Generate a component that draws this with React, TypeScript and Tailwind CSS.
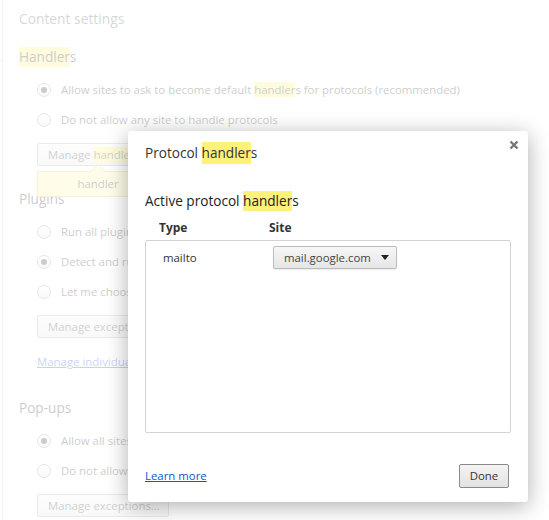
import type { ReactNode } from 'react';

// search-term highlight used on the settings page and in the overlay
function Hit({ children, tall }: { children: ReactNode; tall?: boolean }) {
  return (
    <span className={tall ? 'inline-block bg-[#fff17a] leading-[22px]' : 'bg-[#fff17a]'}>
      {children}
    </span>
  );
}

function Radio({ label, checked }: { label: ReactNode; checked?: boolean }) {
  return (
    <div className="flex h-[30px] items-center pl-[18px]">
      <span className="flex h-[14px] w-[14px] shrink-0 items-center justify-center rounded-full border border-[#999] bg-gradient-to-b from-white to-[#e4e4e4]">
        {checked && <span className="h-[6px] w-[6px] rounded-full bg-[#333]" />}
      </span>
      <span className="ml-[10px] whitespace-nowrap text-[11.4px] leading-[16px] text-[#333]">{label}</span>
    </div>
  );
}

function PageButton({ children }: { children: ReactNode }) {
  return (
    <div className="flex h-[23px] items-center whitespace-nowrap rounded-[2px] border border-[#aaa] bg-gradient-to-b from-[#f6f6f6] to-[#e6e6e6] px-[10px] text-[11.4px] text-[#444]">
      <span>{children}</span>
    </div>
  );
}

function Section({ title, children }: { title: ReactNode; children: ReactNode }) {
  return (
    <section>
      <h3 className="flex h-[24px] items-center text-[13.6px] text-[#303030]">{title}</h3>
      <div className="mt-[6px]">{children}</div>
    </section>
  );
}

function SettingsPage() {
  return (
    <div className="flex h-[520px]">
      <aside className="relative w-[3px] border-r border-[#ccc]">
        <div className="absolute left-0 top-[60px] h-px w-[2px] bg-[#ccc]" />
      </aside>
      <main className="pl-[16px] pt-[7px]">
        <h1 className="flex h-[24px] items-center text-[13.8px] text-[#5c6166]">Content settings</h1>

        <div className="mt-[14px]">
          <Section
            title={
              <span>
                <span className="inline-block bg-[#fff17a] leading-[20px]">Handler</span>s
              </span>
            }
          >
            <Radio checked label={<>Allow sites to ask to become default <Hit>handler</Hit>s for protocols (recommended)</>} />
            <Radio label="Do not allow any site to handle protocols" />
            <div className="relative mt-[8px] ml-[18px] w-[122px]">
              <PageButton>
                Manage <Hit>handler</Hit>s...
              </PageButton>
              <div className="absolute left-0 top-[28px] flex h-[26px] w-full items-center justify-center border border-[#d8c05a] bg-[#fff3a8] text-[11.4px] text-[#333]">
                <svg className="absolute left-[calc(50%-8px)] top-[-8px]" width="16" height="9" viewBox="0 0 16 9">
                  <path d="M0 8.5 L8 0.5 L16 8.5" fill="#fff3a8" stroke="#d8c05a" />
                </svg>
                handler
              </div>
            </div>
          </Section>
        </div>

        <div className="mt-[21px]">
          <Section title="Plugins">
            <Radio label="Run all plugin content" />
            <Radio checked label="Detect and run important plugin content (recommended)" />
            <Radio label="Let me choose when to run plugin content" />
            <div className="mt-[8px] ml-[18px] w-[132px]">
              <PageButton>Manage exceptions...</PageButton>
            </div>
            <div className="ml-[18px] mt-[12px] flex h-[24px] items-center text-[11.4px] text-[#15c] underline">
              Manage individual plugins...
            </div>
          </Section>
        </div>

        <div className="mt-[22px]">
          <Section title="Pop-ups">
            <Radio checked label="Allow all sites to show pop-ups" />
            <Radio label="Do not allow any site to show pop-ups (recommended)" />
            <div className="mt-[8px] ml-[18px] w-[132px]">
              <PageButton>Manage exceptions...</PageButton>
            </div>
          </Section>
        </div>
      </main>
    </div>
  );
}

function HandlersDialog() {
  return (
    <div className="absolute left-[128px] top-[131px] h-[371px] w-[400px] rounded-[3px] bg-white px-[17px] shadow-[0_4px_22px_rgba(0,0,0,0.32)]">
      <button className="absolute right-[9px] top-[9px] flex h-[10px] w-[10px] items-center justify-center">
        <svg width="10" height="10" viewBox="0 0 10 10">
          <path d="M1.5 1.5 L8.5 8.5 M8.5 1.5 L1.5 8.5" stroke="#777" strokeWidth="2.4" />
        </svg>
      </button>

      <div className="mt-[11px] text-[13.6px] leading-[22px] text-[#333]">
        Protocol <Hit tall>handler</Hit>s
      </div>

      <div className="mt-[27px] text-[13.6px] leading-[20px] text-[#222]">
        Active protocol <span className="inline-block bg-[#fff17a] leading-[20px]">handler</span>s
      </div>

      <div className="mt-[9px] flex h-[16px] items-center text-[12px] font-bold text-[#333]">
        <span className="w-[124px] pl-[14px]">Type</span>
        <span>Site</span>
      </div>

      <div className="mt-[4px] h-[193px] rounded-[2px] border border-[#d4d4d4] pt-[5px]">
        <div className="flex h-[23px] items-center pl-[17px] text-[11.4px] text-[#333]">
          <span className="w-[110px]">mailto</span>
          <div className="flex h-[23px] w-[124px] items-center justify-between rounded-[2px] border border-[#bcbcbc] bg-gradient-to-b from-[#f7f7f7] to-[#e6e6e6] pl-[10px] pr-[7px] text-[#444] shadow-[0_1px_1px_rgba(0,0,0,0.08)]">
            <span>mail.google.com</span>
            <svg width="8" height="5" viewBox="0 0 8 5">
              <path d="M0 0 H8 L4 5 Z" fill="#222" />
            </svg>
          </div>
        </div>
      </div>

      <div className="mt-[31px] flex h-[24px] items-center justify-between pr-[2px]">
        <span className="text-[11.4px] text-[#15c] underline">Learn more</span>
        <button className="flex h-[24px] w-[50px] items-center justify-center rounded-[2px] border border-[#8a8a8a] bg-gradient-to-b from-[#f4f4f4] to-[#e2e2e2] text-[11.4px] text-[#333]">
          Done
        </button>
      </div>
    </div>
  );
}

export default function App() {
  return (
    <div className="relative h-[520px] w-[549px] overflow-hidden bg-white font-['Open_Sans','Noto_Sans',sans-serif]">
      <SettingsPage />
      <div className="absolute inset-0 bg-white/75" />
      <HandlersDialog />
    </div>
  );
}
